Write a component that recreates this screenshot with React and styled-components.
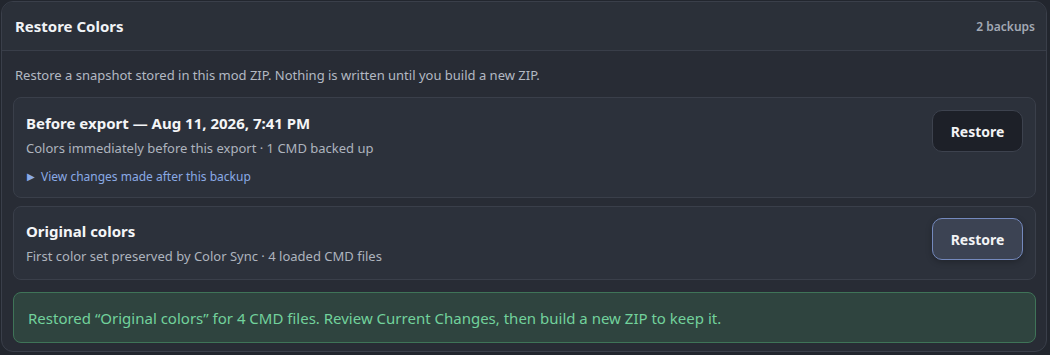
import React from 'react'
import styled, { createGlobalStyle } from 'styled-components'

const GlobalStyle = createGlobalStyle`
    html, body {
        margin: 0;
        background: #22262e;
        font-family: "Noto Sans", "Open Sans", sans-serif;
    }
    * { box-sizing: border-box; }
`

const Panel = styled.section`
    margin: 1px;
    width: 1046px;
    height: 351px;
    border: 1px solid #3a3f4a;
    border-radius: 12px;
    background: #282c35;
    overflow: hidden;
`

const Header = styled.header`
    display: flex;
    align-items: center;
    justify-content: space-between;
    height: 49px;
    padding: 0 11px 0 13px;
    background: #2b3039;
    border-bottom: 1px solid #393e49;
`

const Title = styled.h2`
    margin: 0;
    font-size: 15px;
    font-weight: 700;
    color: #f1f3f6;
`

const Count = styled.span`
    font-size: 12px;
    font-weight: 600;
    color: #a3a9b4;
`

const Body = styled.div`
    display: flex;
    flex-direction: column;
    padding: 15px 10px 10px 11px;
`

const Intro = styled.p`
    margin: 0 0 13px 2px;
    font-size: 13px;
    line-height: 18px;
    color: #b3b9c3;
`

const Card = styled.div`
    display: flex;
    justify-content: space-between;
    align-items: flex-start;
    padding: ${p => p.$tall ? '15px 12px 12px 12px' : '14px 12px 14px 12px'};
    margin-bottom: 8px;
    background: #2c313b;
    border: 1px solid #3a3f4a;
    border-radius: 8px;
`

const Info = styled.div`
    display: flex;
    flex-direction: column;
`

const CardTitle = styled.h3`
    margin: 0 0 6px 0;
    font-size: 15px;
    font-weight: 700;
    line-height: 20px;
    color: #f4f5f7;
`

const CardNote = styled.p`
    margin: 0;
    font-size: 13px;
    line-height: 18px;
    color: #aeb4be;
`

const Toggle = styled.span`
    margin-top: 11px;
    padding-left: 1px;
    font-size: 12px;
    line-height: 16px;
    color: #8aaae6;

    &::before {
        content: '▶';
        font-size: 10px;
        margin-right: 6px;
        vertical-align: 1px;
    }
`

const RestoreButton = styled.button`
    width: 91px;
    height: 42px;
    margin-top: -3px;
    border-radius: 10px;
    font-family: inherit;
    font-size: 14px;
    font-weight: 700;
    color: #f2f3f5;
    background: ${p => p.$active ? '#3c4353' : '#1d2028'};
    border: 1px solid ${p => p.$active ? '#7489bd' : '#3d424e'};
    box-shadow: ${p => p.$active ? '0 2px 6px rgba(0,0,0,0.25)' : 'none'};
`

const Notice = styled.div`
    margin-top: 4px;
    padding: 0 14px;
    height: 51px;
    display: flex;
    align-items: center;
    font-size: 15px;
    color: #72d29c;
    background: #2f443f;
    border: 1px solid #3f7458;
    border-radius: 8px;
`

const BackupCard = ({ title, note, toggle, active }) => (
    <Card $tall={!!toggle}>
        <Info>
            <CardTitle>{title}</CardTitle>
            <CardNote>{note}</CardNote>
            {toggle && <Toggle>{toggle}</Toggle>}
        </Info>
        <RestoreButton $active={active}>Restore</RestoreButton>
    </Card>
)

const App = () => (
    <>
        <GlobalStyle />
        <Panel>
            <Header>
                <Title>Restore Colors</Title>
                <Count>2 backups</Count>
            </Header>
            <Body>
                <Intro>Restore a snapshot stored in this mod ZIP. Nothing is written until you build a new ZIP.</Intro>
                <BackupCard
                    title="Before export — Aug 11, 2026, 7:41 PM"
                    note="Colors immediately before this export · 1 CMD backed up"
                    toggle="View changes made after this backup"
                />
                <BackupCard
                    title="Original colors"
                    note="First color set preserved by Color Sync · 4 loaded CMD files"
                    active
                />
                <Notice>Restored “Original colors” for 4 CMD files. Review Current Changes, then build a new ZIP to keep it.</Notice>
            </Body>
        </Panel>
    </>
)

export default App
